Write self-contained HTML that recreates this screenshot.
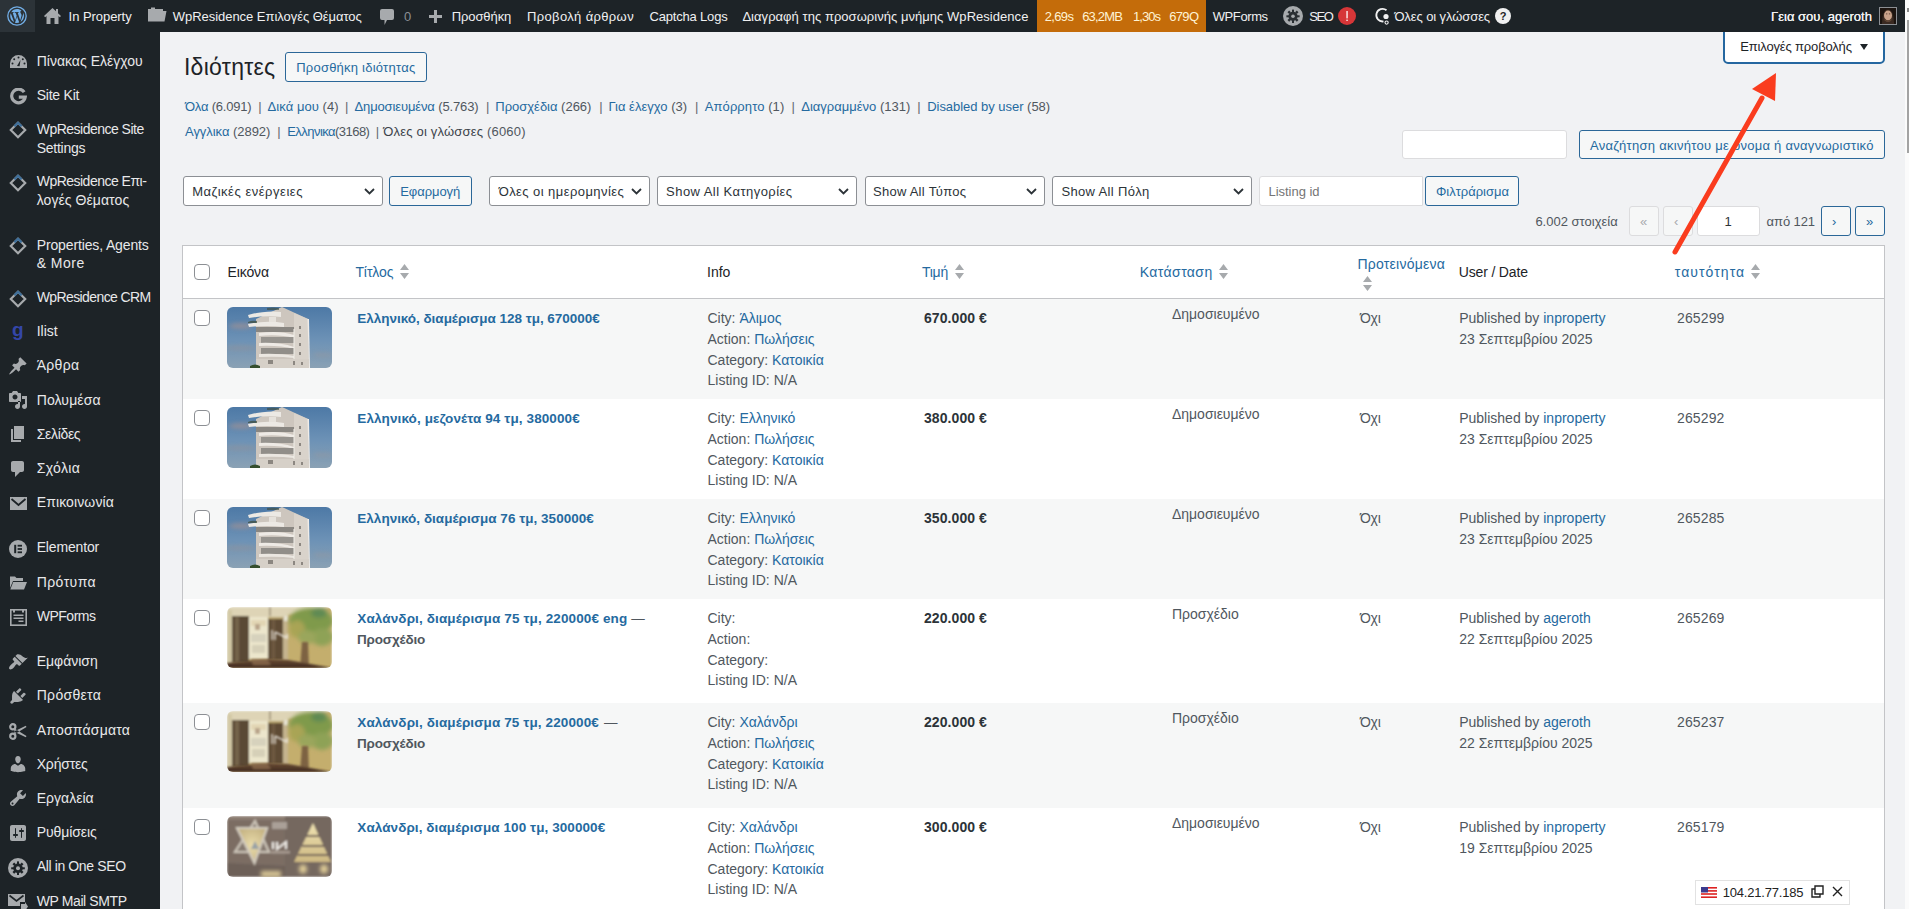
<!DOCTYPE html>
<html><head><meta charset="utf-8"><title>Ιδιότητες</title>
<style>
html,body{margin:0;padding:0;width:1909px;height:909px;overflow:hidden;background:#f1f2f4}
body{position:relative;font-family:"Liberation Sans",sans-serif}
.t{position:absolute;white-space:nowrap;line-height:20px;font-family:"Liberation Sans",sans-serif}
svg{display:block}
</style></head><body>
<div style="position:absolute;left:0px;top:0px;width:1909px;height:909px;background:#f1f2f4"></div><div style="position:absolute;left:0px;top:0px;width:1905px;height:32px;background:#1d2327"></div><div style="position:absolute;left:0px;top:32px;width:160px;height:877px;background:#1d2327"></div><div style="position:absolute;left:1905px;top:0px;width:4px;height:909px;background:#fbfbfb"></div><div style="position:absolute;left:1907px;top:20px;width:2px;height:133px;background:#a3a3a3"></div><div style="position:absolute;left:1907px;top:8px;width:2px;height:4px;background:#8a8a8a"></div><div style="position:absolute;left:0px;top:0px;width:35px;height:32px;background:#2c3338"></div><svg style="position:absolute;left:7px;top:6px" width="20" height="20" viewBox="0 0 20 20"><circle cx="10" cy="10" r="9.2" fill="none" stroke="#72aee6" stroke-width="1.3"/><path fill="#72aee6" d="M3.2 10c0 2.7 1.6 5 3.9 6.1L3.8 7.2C3.4 8.1 3.2 9 3.2 10zm11.4-.3c0-.8-.3-1.4-.6-1.9-.4-.6-.7-1.1-.7-1.7 0-.7.5-1.3 1.2-1.3h.1C13.4 3.7 11.8 3.1 10 3.1c-2.4 0-4.5 1.2-5.7 3.1h.4c.7 0 1.8-.1 1.8-.1.4 0 .4.5 0 .6 0 0-.4 0-.8.1l2.5 7.5 1.5-4.5-1.1-3c-.4 0-.7-.1-.7-.1-.4 0-.3-.6 0-.6 0 0 1.1.1 1.8.1.7 0 1.8-.1 1.8-.1.4 0 .4.5 0 .6 0 0-.4 0-.8.1l2.5 7.4.7-2.3c.3-1 .6-1.7.6-2.3zm-4.5.9l-2.1 6.1c.6.2 1.3.3 2 .3.8 0 1.6-.1 2.3-.4l-.1-.1-2.1-5.9zm6-4c0 .2.1.5.1.7 0 .7-.1 1.5-.5 2.5l-2.1 6.1c2.1-1.2 3.4-3.4 3.4-5.9 0-1.2-.3-2.4-.9-3.4z"/></svg><svg style="position:absolute;left:44px;top:8px" width="17" height="16" viewBox="0 0 17 16"><path fill="#a7aaad" d="M8.5 0 L0 8 L1.2 9.2 L2.5 8 V16 H14.5 V8 L15.8 9.2 L17 8 L14 5.2 V1 H12 V3.3 Z"/><rect x="6.5" y="10" width="4" height="6" fill="#1d2327"/></svg><svg style="position:absolute;left:147px;top:7px" width="20" height="15" viewBox="0 0 20 15"><path fill="#a7aaad" d="M1 2 H4 V0.5 H8 V2 H16 V4 H19.5 L17.5 14.5 H1 Z"/><path fill="#1d2327" d="M2.6 5.2 H18 L16.3 13 H2.6 Z" opacity="0.0"/></svg><svg style="position:absolute;left:380px;top:9px" width="14" height="17" viewBox="0 0 14 17"><path fill="#a7aaad" d="M2 0 H12 Q14 0 14 2 V9 Q14 11 12 11 H7 L4.5 16 V11 H2 Q0 11 0 9 V2 Q0 0 2 0Z"/></svg><div style="position:absolute;left:429px;top:15px;width:13px;height:3px;background:#a7aaad"></div><div style="position:absolute;left:434px;top:10px;width:3px;height:13px;background:#a7aaad"></div><div style="position:absolute;left:1037px;top:0px;width:169px;height:32px;background:#c46c0a"></div><svg style="position:absolute;left:1283px;top:6px" width="20" height="20" viewBox="0 0 20 20"><circle cx="10" cy="10" r="10" fill="#a7aaad"/><g fill="#2a2f33"><circle cx="10" cy="10.3" r="4.6"/><rect x="9" y="3.6" width="2" height="3"/><rect x="9" y="14" width="2" height="3"/><rect x="3.4" y="9.3" width="3" height="2"/><rect x="13.6" y="9.3" width="3" height="2"/><rect x="5" y="5" width="2.4" height="2.4" transform="rotate(45 6.2 6.2)"/><rect x="12.6" y="5" width="2.4" height="2.4" transform="rotate(45 13.8 6.2)"/><rect x="5" y="12.8" width="2.4" height="2.4" transform="rotate(45 6.2 14)"/><rect x="12.6" y="12.8" width="2.4" height="2.4" transform="rotate(45 13.8 14)"/></g><circle cx="10" cy="10.3" r="1.8" fill="#a7aaad"/></svg><div style="position:absolute;left:1338px;top:7px;width:18px;height:18px;border-radius:50%;background:#d63638"></div><svg style="position:absolute;left:1338px;top:7px" width="18" height="18" viewBox="0 0 18 18"><rect x="8.4" y="4" width="1.3" height="7.4" fill="#fff"/><rect x="8.4" y="12.6" width="1.3" height="1.4" fill="#fff"/></svg><svg style="position:absolute;left:1374px;top:7px" width="17" height="18" viewBox="0 0 17 18"><path d="M12.5 3.2 A6.3 6.3 0 1 0 9.5 14.4" fill="none" stroke="#f0f0f1" stroke-width="1.8"/><circle cx="12" cy="9.5" r="2.6" fill="#f0f0f1"/><circle cx="12.6" cy="15.6" r="1.6" fill="none" stroke="#f0f0f1" stroke-width="1.1"/></svg><div style="position:absolute;left:1495px;top:8px;width:16px;height:16px;border-radius:50%;background:#f0f0f1"></div><div style="position:absolute;left:1879px;top:7px;width:16px;height:16px;border:1px solid #8c8f94;line-height:0"><svg width="16" height="16" viewBox="0 0 16 16"><defs><filter id="av"><feGaussianBlur stdDeviation="0.5"/></filter></defs><rect width="16" height="16" fill="#1c1410"/><g filter="url(#av)"><path d="M2 16 Q2 2 8 1.5 Q14 2 14 16Z" fill="#3a2a20"/><ellipse cx="8" cy="7.5" rx="4" ry="5" fill="#c9a28a"/><path d="M4.5 10 Q8 15 11.5 10 L11.5 12.5 Q8 16 4.5 12.5Z" fill="#5e4536"/><rect x="6" y="5.5" width="1.3" height="0.8" fill="#4a3428"/><rect x="8.9" y="5.5" width="1.3" height="0.8" fill="#4a3428"/></g></svg></div><div style="position:absolute;left:10px;top:55px;width:17px;height:14px;line-height:0"><svg width="17" height="14" viewBox="0 0 17 14"><path fill="#a7aaad" d="M8.5 0 A8.5 8.5 0 0 0 0 8.5 V13 H17 V8.5 A8.5 8.5 0 0 0 8.5 0Z"/><g fill="#1d2327"><circle cx="8.5" cy="2.6" r="1"/><circle cx="4.2" cy="4.2" r="1"/><circle cx="12.8" cy="4.2" r="1"/><circle cx="2.5" cy="8.5" r="1"/><circle cx="14.5" cy="8.5" r="1"/><path d="M7 11 L10.5 5 L9.6 11.2 Z"/></g></svg></div><div style="position:absolute;left:10px;top:88px;width:17px;height:17px;line-height:0"><svg width="17" height="17" viewBox="0 0 17 17"><path fill="none" stroke="#a7aaad" stroke-width="3.2" d="M14.2 4.2 A6.8 6.8 0 1 0 15.2 9.2 H8.8"/></svg></div><div style="position:absolute;left:9px;top:121px;width:18px;height:18px;line-height:0"><svg width="18" height="18" viewBox="0 0 18 18"><path fill="none" stroke="#a7aaad" stroke-width="2.2" d="M9 1.8 L16.2 9 L9 16.2 L1.8 9Z"/><path fill="none" stroke="#3f6f9a" stroke-width="2.2" d="M5.4 5.4 L9 1.8 L12.6 5.4"/></svg></div><div style="position:absolute;left:9px;top:174px;width:18px;height:18px;line-height:0"><svg width="18" height="18" viewBox="0 0 18 18"><path fill="none" stroke="#a7aaad" stroke-width="2.2" d="M9 1.8 L16.2 9 L9 16.2 L1.8 9Z"/><path fill="none" stroke="#3f6f9a" stroke-width="2.2" d="M5.4 5.4 L9 1.8 L12.6 5.4"/></svg></div><div style="position:absolute;left:9px;top:237px;width:18px;height:18px;line-height:0"><svg width="18" height="18" viewBox="0 0 18 18"><path fill="none" stroke="#a7aaad" stroke-width="2.2" d="M9 1.8 L16.2 9 L9 16.2 L1.8 9Z"/><path fill="none" stroke="#3f6f9a" stroke-width="2.2" d="M5.4 5.4 L9 1.8 L12.6 5.4"/></svg></div><div style="position:absolute;left:9px;top:290px;width:18px;height:18px;line-height:0"><svg width="18" height="18" viewBox="0 0 18 18"><path fill="none" stroke="#a7aaad" stroke-width="2.2" d="M9 1.8 L16.2 9 L9 16.2 L1.8 9Z"/><path fill="none" stroke="#3f6f9a" stroke-width="2.2" d="M5.4 5.4 L9 1.8 L12.6 5.4"/></svg></div><div style="position:absolute;left:10px;top:323px;width:17px;height:19px;line-height:0"><svg width="17" height="19" viewBox="0 0 17 19"><text x="2" y="13" font-family="Liberation Sans" font-weight="700" font-size="19" fill="#3446a8">g</text></svg></div><div style="position:absolute;left:8px;top:356px;width:20px;height:20px;line-height:0"><svg width="20" height="20" viewBox="0 0 20 20"><path fill="#a7aaad" d="M10.44 3.02l1.82-1.82 6.36 6.35-1.83 1.82c-1.05-.68-2.48-.57-3.41.36l-.75.75c-.92.93-1.040 2.35-.35 3.41l-1.83 1.82-2.41-2.41-2.8 2.79c-.42.42-3.38 2.71-3.8 2.29s1.86-3.39 2.28-3.81l2.79-2.79L4.1 9.36l1.83-1.82c1.05.69 2.48.57 3.4-.36l.75-.75c.93-.92 1.05-2.35.36-3.41z"/></svg></div><div style="position:absolute;left:8px;top:390px;width:20px;height:20px;line-height:0"><svg width="20" height="20" viewBox="0 0 20 20"><path fill="#a7aaad" d="M13 11V4c0-.55-.45-1-1-1h-1.67L9 1H5L3.67 3H2c-.55 0-1 .45-1 1v7c0 .55.45 1 1 1h10c.55 0 1-.45 1-1zM7 4.5c1.38 0 2.5 1.120 2.5 2.5S8.38 9.5 7 9.5 4.5 8.38 4.5 7 5.62 4.5 7 4.5zM14 6h5v10.5c0 1.38-1.12 2.5-2.5 2.5S14 17.88 14 16.5s1.12-2.5 2.5-2.5c.17 0 .34.02.5.05V9h-3V6zm-4 8.05V11h2v5.5c0 1.38-1.12 2.5-2.5 2.5S7 17.88 7 16.5 8.12 14 9.5 14c.17 0 .34.02.5.05z"/></svg></div><div style="position:absolute;left:8px;top:424px;width:20px;height:20px;line-height:0"><svg width="20" height="20" viewBox="0 0 20 20"><path fill="#a7aaad" d="M6 15V2h10v13H6zm-1 1h8v2H3V5h2v11z"/></svg></div><div style="position:absolute;left:8px;top:459px;width:20px;height:20px;line-height:0"><svg width="20" height="20" viewBox="0 0 20 20"><path fill="#a7aaad" d="M5 2h9c1.1 0 2 .9 2 2v7c0 1.1-.9 2-2 2h-2l-5 5v-5H5c-1.1 0-2-.9-2-2V4c0-1.1.9-2 2-2z"/></svg></div><div style="position:absolute;left:10px;top:497px;width:17px;height:13px;line-height:0"><svg width="17" height="13" viewBox="0 0 17 13"><path fill="#a7aaad" d="M0 0 H17 V13 H0Z"/><path fill="none" stroke="#1d2327" stroke-width="1.8" d="M1.5 2 L8.5 8 L15.5 2"/></svg></div><div style="position:absolute;left:9px;top:540px;width:18px;height:18px;line-height:0"><svg width="18" height="18" viewBox="0 0 18 18"><circle cx="9" cy="9" r="9" fill="#a7aaad"/><g fill="#1d2327"><rect x="5.2" y="4.8" width="2" height="8.4"/><rect x="8.6" y="4.8" width="4.4" height="1.8"/><rect x="8.6" y="8.1" width="4.4" height="1.8"/><rect x="8.6" y="11.4" width="4.4" height="1.8"/></g></svg></div><div style="position:absolute;left:10px;top:576px;width:17px;height:14px;line-height:0"><svg width="17" height="14" viewBox="0 0 17 14"><path fill="#a7aaad" d="M0 0.5 H5 L6.5 2 H13 V5 H3 L0 12Z M3.2 6 H17 L14 13.5 H0.3Z"/></svg></div><div style="position:absolute;left:10px;top:609px;width:17px;height:17px;line-height:0"><svg width="17" height="17" viewBox="0 0 17 17"><rect x="0.8" y="0.8" width="15.4" height="15.4" fill="none" stroke="#a7aaad" stroke-width="1.6"/><g fill="#a7aaad"><rect x="3" y="0.5" width="2" height="3"/><rect x="12" y="0.5" width="2" height="3"/><rect x="3.5" y="5.5" width="10" height="1.5"/><rect x="3.5" y="8.5" width="10" height="1.5"/><rect x="8.5" y="11.5" width="5" height="1.5"/></g></svg></div><div style="position:absolute;left:8px;top:652px;width:20px;height:20px;line-height:0"><svg width="20" height="20" viewBox="0 0 20 20"><path fill="#a7aaad" d="M14.48 11.06L7.41 3.99l1.5-1.5c.5-.56 2.3-.47 3.51.32 1.21.8 1.43 1.28 2.91 2.1 1.18.64 2.45 1.26 4.45.85zm-.71.71L6.7 4.7 4.93 6.47c-.39.39-.39 1.02 0 1.41l1.06 1.06c.39.39.39 1.03 0 1.42-.6.6-1.43 1.11-2.21 1.69-.35.26-.7.53-1.01.84C1.43 14.23.4 16.08 1.4 17.07c.99 1 2.84-.03 4.18-1.36.31-.31.58-.66.85-1.02.57-.78 1.08-1.61 1.69-2.21.39-.39 1.02-.39 1.41 0l1.06 1.06c.39.39 1.02.39 1.41 0z"/></svg></div><div style="position:absolute;left:8px;top:686px;width:20px;height:20px;line-height:0"><svg width="20" height="20" viewBox="0 0 20 20"><path fill="#a7aaad" d="M13.11 4.36L9.87 7.6 8 5.73l3.24-3.24c.35-.34 1.05-.2 1.56.32.52.51.66 1.21.31 1.55zm-8 1.77l.91-1.12 9.01 9.01-1.19.84c-.71.71-2.63 1.16-3.820 1.16H6.14L4.9 17.26c-.59.59-1.54.59-2.12 0-.59-.58-.59-1.53 0-2.12l1.24-1.24v-3.88c0-1.13.4-3.19 1.09-3.890zm7.26 3.97l3.24-3.24c.34-.35 1.04-.21 1.55.31.52.51.66 1.21.31 1.55l-3.24 3.25z"/></svg></div><div style="position:absolute;left:9px;top:723px;width:18px;height:17px;line-height:0"><svg width="18" height="17" viewBox="0 0 18 17"><g fill="none" stroke="#a7aaad" stroke-width="2.2"><circle cx="3.8" cy="3.8" r="2.6"/><circle cx="3.8" cy="13.2" r="2.6"/></g><path fill="#a7aaad" d="M5.5 5.5 L17.5 13 L16.8 14.2 L5.2 8.8Z M5.2 11.5 L17.5 4 L16.8 2.8 L5.5 8.2Z"/></svg></div><div style="position:absolute;left:8px;top:754px;width:20px;height:20px;line-height:0"><svg width="20" height="20" viewBox="0 0 20 20"><path fill="#a7aaad" d="M10 9.25c-2.27 0-2.73-3.44-2.73-3.44C7 4.02 7.82 2 9.97 2c2.16 0 2.98 2.02 2.71 3.81 0 0-.41 3.44-2.68 3.44zm0 2.57L12.72 10c2.39 0 4.52 2.33 4.52 4.53v2.49s-3.65 1.13-7.24 1.13c-3.65 0-7.24-1.130-7.24-1.13v-2.49c0-2.25 1.94-4.48 4.47-4.48z"/></svg></div><div style="position:absolute;left:8px;top:788px;width:20px;height:20px;line-height:0"><svg width="20" height="20" viewBox="0 0 20 20"><path fill="#a7aaad" d="M16.68 9.77c-1.34 1.34-3.3 1.67-4.95.99l-5.41 6.52c-.99.99-2.59.99-3.58 0s-.99-2.59 0-3.57l6.52-5.42c-.68-1.65-.35-3.61.99-4.95 1.28-1.28 3.12-1.62 4.72-1.06l-2.89 2.89 2.82 2.82 2.86-2.870c.53 1.58.18 3.39-1.08 4.65zM3.81 16.21c.4.39 1.040.39 1.43 0 .4-.4.4-1.04 0-1.43-.39-.4-1.03-.4-1.43 0-.39.39-.39 1.03 0 1.43z"/></svg></div><div style="position:absolute;left:8px;top:823px;width:20px;height:20px;line-height:0"><svg width="20" height="20" viewBox="0 0 20 20"><path fill="#a7aaad" d="M18 16V4c0-1.1-.9-2-2-2H4c-1.1 0-2 .9-2 2v12c0 1.1.9 2 2 2h12c1.1 0 2-.9 2-2zM8 11h1c.55 0 1 .45 1 1s-.45 1-1 1H8v1.5c0 .28-.22.5-.5.5s-.5-.22-.5-.5V13H6c-.55 0-1-.45-1-1s.45-1 1-1h1V5.5c0-.28.22-.5.5-.5s.5.22.5.5V11zm5-2h-1c-.55 0-1-.45-1-1s.45-1 1-1h1V5.5c0-.28.22-.5.5-.5s.5.22.5.5V7h1c.55 0 1 .45 1 1s-.45 1-1 1h-1v5.5c0 .28-.22.5-.5.5s-.5-.22-.5-.5V9z"/></svg></div><div style="position:absolute;left:8px;top:858px;width:20px;height:20px;line-height:0"><svg width="20" height="20" viewBox="0 0 20 20"><circle cx="10" cy="10" r="10" fill="#a7aaad"/><g fill="#1d2327"><circle cx="10" cy="10.3" r="4.8"/><rect x="9" y="3.4" width="2" height="3"/><rect x="9" y="14" width="2" height="3"/><rect x="3.2" y="9.3" width="3" height="2"/><rect x="13.8" y="9.3" width="3" height="2"/><rect x="5" y="5" width="2.4" height="2.4" transform="rotate(45 6.2 6.2)"/><rect x="12.6" y="5" width="2.4" height="2.4" transform="rotate(45 13.8 6.2)"/><rect x="5" y="12.8" width="2.4" height="2.4" transform="rotate(45 6.2 14)"/><rect x="12.6" y="12.8" width="2.4" height="2.4" transform="rotate(45 13.8 14)"/></g><circle cx="10" cy="10.3" r="2" fill="#a7aaad"/></svg></div><div style="position:absolute;left:8px;top:894px;width:20px;height:17px;line-height:0"><svg width="20" height="17" viewBox="0 0 20 17"><path fill="#a7aaad" d="M0 0 H17 V8 H12 V12 H0Z"/><path fill="none" stroke="#1d2327" stroke-width="1.6" d="M1.5 1.5 L8.5 7 L15.5 1.5"/><path fill="#a7aaad" d="M13 10 H17 V8 L20 12.5 L17 17 V15 H13Z"/></svg></div><div style="position:absolute;left:1723px;top:26px;width:158px;height:34px;background:#fff;border:2px solid #2567a0;border-radius:0 0 5px 5px"></div><svg style="position:absolute;left:1860px;top:44px" width="8" height="6" viewBox="0 0 8 6"><path d="M0 0 H8 L4 6Z" fill="#1d2327"/></svg><div style="position:absolute;left:1700px;top:0px;width:205px;height:32px;background:#1d2327"></div><div style="position:absolute;left:1879px;top:7px;width:16px;height:16px;border:1px solid #8c8f94;line-height:0"><svg width="16" height="16" viewBox="0 0 16 16"><defs><filter id="av"><feGaussianBlur stdDeviation="0.5"/></filter></defs><rect width="16" height="16" fill="#1c1410"/><g filter="url(#av)"><path d="M2 16 Q2 2 8 1.5 Q14 2 14 16Z" fill="#3a2a20"/><ellipse cx="8" cy="7.5" rx="4" ry="5" fill="#c9a28a"/><path d="M4.5 10 Q8 15 11.5 10 L11.5 12.5 Q8 16 4.5 12.5Z" fill="#5e4536"/><rect x="6" y="5.5" width="1.3" height="0.8" fill="#4a3428"/><rect x="8.9" y="5.5" width="1.3" height="0.8" fill="#4a3428"/></g></svg></div><div style="position:absolute;left:285px;top:52px;width:140px;height:28px;border:1px solid #2b6798;border-radius:3px;background:#f6f7f7"></div><div style="position:absolute;left:1402px;top:130px;width:163px;height:27px;background:#fff;border:1px solid #dcdcde;border-radius:3px"></div><div style="position:absolute;left:1579px;top:130px;width:304px;height:27px;background:#f6f7f7;border:1px solid #2b6798;border-radius:3px"></div><div style="position:absolute;left:183px;top:176px;width:198px;height:28px;background:#fff;border:1px solid #8c8f94;border-radius:3px"></div><svg style="position:absolute;left:363.5px;top:188px" width="11" height="7" viewBox="0 0 11 7"><path d="M1 1 L5.5 5.5 L10 1" fill="none" stroke="#2c3338" stroke-width="1.8"/></svg><div style="position:absolute;left:389px;top:176px;width:81px;height:28px;background:#f6f7f7;border:1px solid #2b6798;border-radius:3px"></div><div style="position:absolute;left:489px;top:176px;width:159px;height:28px;background:#fff;border:1px solid #8c8f94;border-radius:3px"></div><svg style="position:absolute;left:630.5px;top:188px" width="11" height="7" viewBox="0 0 11 7"><path d="M1 1 L5.5 5.5 L10 1" fill="none" stroke="#2c3338" stroke-width="1.8"/></svg><div style="position:absolute;left:657px;top:176px;width:198px;height:28px;background:#fff;border:1px solid #8c8f94;border-radius:3px"></div><svg style="position:absolute;left:837.5px;top:188px" width="11" height="7" viewBox="0 0 11 7"><path d="M1 1 L5.5 5.5 L10 1" fill="none" stroke="#2c3338" stroke-width="1.8"/></svg><div style="position:absolute;left:865px;top:176px;width:178px;height:28px;background:#fff;border:1px solid #8c8f94;border-radius:3px"></div><svg style="position:absolute;left:1025.5px;top:188px" width="11" height="7" viewBox="0 0 11 7"><path d="M1 1 L5.5 5.5 L10 1" fill="none" stroke="#2c3338" stroke-width="1.8"/></svg><div style="position:absolute;left:1052px;top:176px;width:198px;height:28px;background:#fff;border:1px solid #8c8f94;border-radius:3px"></div><svg style="position:absolute;left:1232.5px;top:188px" width="11" height="7" viewBox="0 0 11 7"><path d="M1 1 L5.5 5.5 L10 1" fill="none" stroke="#2c3338" stroke-width="1.8"/></svg><div style="position:absolute;left:1259px;top:176px;width:162px;height:28px;background:#fff;border:1px solid #dcdcde;border-radius:3px 0 0 3px"></div><div style="position:absolute;left:1425px;top:176px;width:92px;height:28px;background:#f6f7f7;border:1px solid #2b6798;border-radius:3px"></div><div style="position:absolute;left:1629px;top:206px;width:28px;height:28px;background:#f6f7f7;border:1px solid #dcdcde;border-radius:3px"></div><div style="position:absolute;left:1663px;top:206px;width:28px;height:28px;background:#f6f7f7;border:1px solid #dcdcde;border-radius:3px"></div><div style="position:absolute;left:1697px;top:206px;width:61px;height:28px;background:#fff;border:1px solid #dcdcde;border-radius:3px"></div><div style="position:absolute;left:1821px;top:206px;width:28px;height:28px;background:#f6f7f7;border:1px solid #2b6798;border-radius:3px"></div><div style="position:absolute;left:1855px;top:206px;width:28px;height:28px;background:#f6f7f7;border:1px solid #2b6798;border-radius:3px"></div><div style="position:absolute;left:182px;top:245px;width:1701px;height:670px;background:#fff;border:1px solid #c3c4c7;border-bottom:0"></div><div style="position:absolute;left:183px;top:298px;width:1701px;height:1px;background:#c3c4c7"></div><div style="position:absolute;left:183px;top:299px;width:1701px;height:100px;background:#f6f7f7"></div><div style="position:absolute;left:183px;top:499px;width:1701px;height:100px;background:#f6f7f7"></div><div style="position:absolute;left:183px;top:703px;width:1701px;height:105px;background:#f6f7f7"></div><div style="position:absolute;left:194px;top:264px;width:14px;height:14px;background:#fff;border:1px solid #8c8f94;border-radius:4px"></div><svg style="position:absolute;left:400px;top:264px" width="9" height="16" viewBox="0 0 9 16"><path d="M4.5 0 L9 6 H0Z M0 9 H9 L4.5 15Z" fill="#a7aaad"/></svg><svg style="position:absolute;left:955px;top:264px" width="9" height="16" viewBox="0 0 9 16"><path d="M4.5 0 L9 6 H0Z M0 9 H9 L4.5 15Z" fill="#a7aaad"/></svg><svg style="position:absolute;left:1219px;top:264px" width="9" height="16" viewBox="0 0 9 16"><path d="M4.5 0 L9 6 H0Z M0 9 H9 L4.5 15Z" fill="#a7aaad"/></svg><svg style="position:absolute;left:1363px;top:276px" width="9" height="16" viewBox="0 0 9 16"><path d="M4.5 0 L9 6 H0Z M0 9 H9 L4.5 15Z" fill="#a7aaad"/></svg><svg style="position:absolute;left:1751px;top:264px" width="9" height="16" viewBox="0 0 9 16"><path d="M4.5 0 L9 6 H0Z M0 9 H9 L4.5 15Z" fill="#a7aaad"/></svg><div style="position:absolute;left:194px;top:310px;width:14px;height:14px;background:#fff;border:1px solid #8c8f94;border-radius:4px"></div><div style="position:absolute;left:227px;top:307px;width:105px;height:61px;border-radius:6px;overflow:hidden;line-height:0"><svg width="105" height="61" viewBox="0 0 105 61"><defs><linearGradient id="sky" x1="0" y1="0" x2="0" y2="1"><stop offset="0" stop-color="#4d79a6"/><stop offset="0.55" stop-color="#6d92b6"/><stop offset="1" stop-color="#8aa1b4"/></linearGradient><filter id="fb" x="-5%" y="-5%" width="110%" height="110%"><feGaussianBlur stdDeviation="0.7"/></filter><filter id="fc" x="-20%" y="-50%" width="140%" height="200%"><feGaussianBlur stdDeviation="2"/></filter></defs>
<rect width="105" height="61" fill="url(#sky)"/>
<g filter="url(#fc)" opacity="0.75"><ellipse cx="14" cy="19" rx="12" ry="3" fill="#9a9096"/><ellipse cx="14" cy="41" rx="16" ry="2.5" fill="#8a93a0"/><ellipse cx="96" cy="48" rx="10" ry="2" fill="#8e98a4"/></g>
<g filter="url(#fb)">
<path d="M29 12 L55 0 L81 12 L82 61 L29 61Z" fill="#cdc6be"/>
<path d="M67 6 L81 12 L82 61 L67 61Z" fill="#d9d3cb"/>
<path d="M80.5 12 L82 61 L83 61 L82 12Z" fill="#f0ece8"/>
<path d="M21 8 Q40 3 54 5 L54 10 Q40 8 22 11Z" fill="#ece9e4"/>
<path d="M21 17 Q40 13 57 16 L57 20 Q40 18 22 20Z" fill="#ece9e4"/>
<rect x="29" y="20" width="38" height="5" fill="#8a8782"/>
<path d="M32 26 Q52 23 67 28 L67 31 Q52 27 32 29Z" fill="#eeeae5"/>
<rect x="34" y="30" width="33" height="6" fill="#96938e"/>
<path d="M32 36 Q52 35 67 40 L67 42 Q52 38 32 39Z" fill="#eeeae5"/>
<rect x="34" y="41" width="33" height="6" fill="#918e89"/>
<path d="M32 47 Q52 46 67 49 L67 51 Q52 49 32 50Z" fill="#ebe7e1"/>
<rect x="29" y="52" width="53" height="9" fill="#d6d0c8"/>
<g fill="#8c8781"><rect x="72" y="19" width="2" height="3"/><rect x="72" y="27" width="2" height="3"/><rect x="72" y="36" width="2" height="3"/><rect x="72" y="45" width="2" height="3"/><rect x="66" y="54" width="2" height="4"/><rect x="74" y="55" width="2" height="3"/><rect x="41" y="53" width="5" height="4"/></g>
<rect x="66.5" y="22" width="1" height="30" fill="#f2efea"/>
<rect x="42" y="10" width="7" height="5" fill="#e6e2dc"/>
<path d="M23 59 Q28 56 33 59 L33 61 L23 61Z" fill="#35502f"/>
<path d="M21 15 Q25 13 30 14 L30 16 L21 16Z" fill="#3a4a38" opacity="0.7"/>
<path d="M40 1 Q46 0 52 1 L52 3 L40 3Z" fill="#3a4a38" opacity="0.6"/>
</g></svg></div><div style="position:absolute;left:194px;top:410px;width:14px;height:14px;background:#fff;border:1px solid #8c8f94;border-radius:4px"></div><div style="position:absolute;left:227px;top:407px;width:105px;height:61px;border-radius:6px;overflow:hidden;line-height:0"><svg width="105" height="61" viewBox="0 0 105 61"><defs><linearGradient id="sky" x1="0" y1="0" x2="0" y2="1"><stop offset="0" stop-color="#4d79a6"/><stop offset="0.55" stop-color="#6d92b6"/><stop offset="1" stop-color="#8aa1b4"/></linearGradient><filter id="fb" x="-5%" y="-5%" width="110%" height="110%"><feGaussianBlur stdDeviation="0.7"/></filter><filter id="fc" x="-20%" y="-50%" width="140%" height="200%"><feGaussianBlur stdDeviation="2"/></filter></defs>
<rect width="105" height="61" fill="url(#sky)"/>
<g filter="url(#fc)" opacity="0.75"><ellipse cx="14" cy="19" rx="12" ry="3" fill="#9a9096"/><ellipse cx="14" cy="41" rx="16" ry="2.5" fill="#8a93a0"/><ellipse cx="96" cy="48" rx="10" ry="2" fill="#8e98a4"/></g>
<g filter="url(#fb)">
<path d="M29 12 L55 0 L81 12 L82 61 L29 61Z" fill="#cdc6be"/>
<path d="M67 6 L81 12 L82 61 L67 61Z" fill="#d9d3cb"/>
<path d="M80.5 12 L82 61 L83 61 L82 12Z" fill="#f0ece8"/>
<path d="M21 8 Q40 3 54 5 L54 10 Q40 8 22 11Z" fill="#ece9e4"/>
<path d="M21 17 Q40 13 57 16 L57 20 Q40 18 22 20Z" fill="#ece9e4"/>
<rect x="29" y="20" width="38" height="5" fill="#8a8782"/>
<path d="M32 26 Q52 23 67 28 L67 31 Q52 27 32 29Z" fill="#eeeae5"/>
<rect x="34" y="30" width="33" height="6" fill="#96938e"/>
<path d="M32 36 Q52 35 67 40 L67 42 Q52 38 32 39Z" fill="#eeeae5"/>
<rect x="34" y="41" width="33" height="6" fill="#918e89"/>
<path d="M32 47 Q52 46 67 49 L67 51 Q52 49 32 50Z" fill="#ebe7e1"/>
<rect x="29" y="52" width="53" height="9" fill="#d6d0c8"/>
<g fill="#8c8781"><rect x="72" y="19" width="2" height="3"/><rect x="72" y="27" width="2" height="3"/><rect x="72" y="36" width="2" height="3"/><rect x="72" y="45" width="2" height="3"/><rect x="66" y="54" width="2" height="4"/><rect x="74" y="55" width="2" height="3"/><rect x="41" y="53" width="5" height="4"/></g>
<rect x="66.5" y="22" width="1" height="30" fill="#f2efea"/>
<rect x="42" y="10" width="7" height="5" fill="#e6e2dc"/>
<path d="M23 59 Q28 56 33 59 L33 61 L23 61Z" fill="#35502f"/>
<path d="M21 15 Q25 13 30 14 L30 16 L21 16Z" fill="#3a4a38" opacity="0.7"/>
<path d="M40 1 Q46 0 52 1 L52 3 L40 3Z" fill="#3a4a38" opacity="0.6"/>
</g></svg></div><div style="position:absolute;left:194px;top:510px;width:14px;height:14px;background:#fff;border:1px solid #8c8f94;border-radius:4px"></div><div style="position:absolute;left:227px;top:507px;width:105px;height:61px;border-radius:6px;overflow:hidden;line-height:0"><svg width="105" height="61" viewBox="0 0 105 61"><defs><linearGradient id="sky" x1="0" y1="0" x2="0" y2="1"><stop offset="0" stop-color="#4d79a6"/><stop offset="0.55" stop-color="#6d92b6"/><stop offset="1" stop-color="#8aa1b4"/></linearGradient><filter id="fb" x="-5%" y="-5%" width="110%" height="110%"><feGaussianBlur stdDeviation="0.7"/></filter><filter id="fc" x="-20%" y="-50%" width="140%" height="200%"><feGaussianBlur stdDeviation="2"/></filter></defs>
<rect width="105" height="61" fill="url(#sky)"/>
<g filter="url(#fc)" opacity="0.75"><ellipse cx="14" cy="19" rx="12" ry="3" fill="#9a9096"/><ellipse cx="14" cy="41" rx="16" ry="2.5" fill="#8a93a0"/><ellipse cx="96" cy="48" rx="10" ry="2" fill="#8e98a4"/></g>
<g filter="url(#fb)">
<path d="M29 12 L55 0 L81 12 L82 61 L29 61Z" fill="#cdc6be"/>
<path d="M67 6 L81 12 L82 61 L67 61Z" fill="#d9d3cb"/>
<path d="M80.5 12 L82 61 L83 61 L82 12Z" fill="#f0ece8"/>
<path d="M21 8 Q40 3 54 5 L54 10 Q40 8 22 11Z" fill="#ece9e4"/>
<path d="M21 17 Q40 13 57 16 L57 20 Q40 18 22 20Z" fill="#ece9e4"/>
<rect x="29" y="20" width="38" height="5" fill="#8a8782"/>
<path d="M32 26 Q52 23 67 28 L67 31 Q52 27 32 29Z" fill="#eeeae5"/>
<rect x="34" y="30" width="33" height="6" fill="#96938e"/>
<path d="M32 36 Q52 35 67 40 L67 42 Q52 38 32 39Z" fill="#eeeae5"/>
<rect x="34" y="41" width="33" height="6" fill="#918e89"/>
<path d="M32 47 Q52 46 67 49 L67 51 Q52 49 32 50Z" fill="#ebe7e1"/>
<rect x="29" y="52" width="53" height="9" fill="#d6d0c8"/>
<g fill="#8c8781"><rect x="72" y="19" width="2" height="3"/><rect x="72" y="27" width="2" height="3"/><rect x="72" y="36" width="2" height="3"/><rect x="72" y="45" width="2" height="3"/><rect x="66" y="54" width="2" height="4"/><rect x="74" y="55" width="2" height="3"/><rect x="41" y="53" width="5" height="4"/></g>
<rect x="66.5" y="22" width="1" height="30" fill="#f2efea"/>
<rect x="42" y="10" width="7" height="5" fill="#e6e2dc"/>
<path d="M23 59 Q28 56 33 59 L33 61 L23 61Z" fill="#35502f"/>
<path d="M21 15 Q25 13 30 14 L30 16 L21 16Z" fill="#3a4a38" opacity="0.7"/>
<path d="M40 1 Q46 0 52 1 L52 3 L40 3Z" fill="#3a4a38" opacity="0.6"/>
</g></svg></div><div style="position:absolute;left:194px;top:610px;width:14px;height:14px;background:#fff;border:1px solid #8c8f94;border-radius:4px"></div><div style="position:absolute;left:227px;top:607px;width:105px;height:61px;border-radius:6px;overflow:hidden;line-height:0"><svg width="105" height="61" viewBox="0 0 105 61"><defs><filter id="fr" x="-5%" y="-5%" width="110%" height="110%"><feGaussianBlur stdDeviation="0.9"/></filter><filter id="fr2" x="-20%" y="-20%" width="140%" height="140%"><feGaussianBlur stdDeviation="2.2"/></filter><linearGradient id="flr" x1="0" y1="0" x2="0" y2="1"><stop offset="0" stop-color="#6a4c36"/><stop offset="1" stop-color="#3f2a1e"/></linearGradient></defs>
<g filter="url(#fr)">
<rect width="105" height="61" fill="#b9a56c"/>
<path d="M0 0 H105 V3 L60 10 H0Z" fill="#ded4b6"/>
<rect x="0" y="3" width="5" height="58" fill="#d3c9a6"/>
<rect x="5" y="9" width="17" height="47" fill="#5a4a36"/>
<rect x="8" y="10" width="4" height="45" fill="#76644b"/>
<rect x="22" y="10" width="19" height="42" fill="#ece6cc"/>
<rect x="24" y="13" width="15" height="6" fill="#e2d6b4"/>
<rect x="28" y="17" width="5" height="6" fill="#b9a48a"/>
<rect x="24" y="27" width="15" height="8" fill="#d7d2bd"/>
<rect x="25" y="38" width="13" height="8" fill="#d6d0b8"/>
<rect x="41" y="12" width="15" height="41" fill="#5f4b35"/>
<rect x="45" y="12" width="3" height="41" fill="#6f5a42"/>
<rect x="56" y="9" width="5" height="44" fill="#c5b48f"/>
<rect x="57" y="9" width="6" height="5" fill="#e9e4d4"/>
<path d="M61 8 L105 0 L105 61 L61 53Z" fill="#c4ae6d"/>
<path d="M43 0 V9" stroke="#5a4a36" stroke-width="0.8"/>
</g>
<g filter="url(#fr2)">
<ellipse cx="84" cy="14" rx="22" ry="13" fill="#7f9a4c"/>
<ellipse cx="70" cy="22" rx="8" ry="9" fill="#a9a455"/>
<ellipse cx="95" cy="30" rx="11" ry="9" fill="#8ea256"/>
<ellipse cx="80" cy="30" rx="9" ry="7" fill="#9aa65c"/>
<ellipse cx="92" cy="6" rx="8" ry="5" fill="#5f8a52"/>
</g>
<g filter="url(#fr)">
<path d="M75 35 L81 35 L82 61 L73 61Z" fill="#7d6242"/>
<path d="M0 56 L41 52 L61 53 L105 61 L0 61Z" fill="url(#flr)"/>
<path d="M24 52 L40 52 L44 58 L26 58Z" fill="#8a6a4c" opacity="0.8"/>
<path d="M45 23 V33 M48 25 V33 M48 25 L60 31 V27" stroke="#f2efe8" stroke-width="1.5" fill="none" opacity="0.85"/>
</g></svg></div><div style="position:absolute;left:194px;top:714px;width:14px;height:14px;background:#fff;border:1px solid #8c8f94;border-radius:4px"></div><div style="position:absolute;left:227px;top:711px;width:105px;height:61px;border-radius:6px;overflow:hidden;line-height:0"><svg width="105" height="61" viewBox="0 0 105 61"><defs><filter id="fr" x="-5%" y="-5%" width="110%" height="110%"><feGaussianBlur stdDeviation="0.9"/></filter><filter id="fr2" x="-20%" y="-20%" width="140%" height="140%"><feGaussianBlur stdDeviation="2.2"/></filter><linearGradient id="flr" x1="0" y1="0" x2="0" y2="1"><stop offset="0" stop-color="#6a4c36"/><stop offset="1" stop-color="#3f2a1e"/></linearGradient></defs>
<g filter="url(#fr)">
<rect width="105" height="61" fill="#b9a56c"/>
<path d="M0 0 H105 V3 L60 10 H0Z" fill="#ded4b6"/>
<rect x="0" y="3" width="5" height="58" fill="#d3c9a6"/>
<rect x="5" y="9" width="17" height="47" fill="#5a4a36"/>
<rect x="8" y="10" width="4" height="45" fill="#76644b"/>
<rect x="22" y="10" width="19" height="42" fill="#ece6cc"/>
<rect x="24" y="13" width="15" height="6" fill="#e2d6b4"/>
<rect x="28" y="17" width="5" height="6" fill="#b9a48a"/>
<rect x="24" y="27" width="15" height="8" fill="#d7d2bd"/>
<rect x="25" y="38" width="13" height="8" fill="#d6d0b8"/>
<rect x="41" y="12" width="15" height="41" fill="#5f4b35"/>
<rect x="45" y="12" width="3" height="41" fill="#6f5a42"/>
<rect x="56" y="9" width="5" height="44" fill="#c5b48f"/>
<rect x="57" y="9" width="6" height="5" fill="#e9e4d4"/>
<path d="M61 8 L105 0 L105 61 L61 53Z" fill="#c4ae6d"/>
<path d="M43 0 V9" stroke="#5a4a36" stroke-width="0.8"/>
</g>
<g filter="url(#fr2)">
<ellipse cx="84" cy="14" rx="22" ry="13" fill="#7f9a4c"/>
<ellipse cx="70" cy="22" rx="8" ry="9" fill="#a9a455"/>
<ellipse cx="95" cy="30" rx="11" ry="9" fill="#8ea256"/>
<ellipse cx="80" cy="30" rx="9" ry="7" fill="#9aa65c"/>
<ellipse cx="92" cy="6" rx="8" ry="5" fill="#5f8a52"/>
</g>
<g filter="url(#fr)">
<path d="M75 35 L81 35 L82 61 L73 61Z" fill="#7d6242"/>
<path d="M0 56 L41 52 L61 53 L105 61 L0 61Z" fill="url(#flr)"/>
<path d="M24 52 L40 52 L44 58 L26 58Z" fill="#8a6a4c" opacity="0.8"/>
<path d="M45 23 V33 M48 25 V33 M48 25 L60 31 V27" stroke="#f2efe8" stroke-width="1.5" fill="none" opacity="0.85"/>
</g></svg></div><div style="position:absolute;left:194px;top:819px;width:14px;height:14px;background:#fff;border:1px solid #8c8f94;border-radius:4px"></div><div style="position:absolute;left:227px;top:816px;width:105px;height:61px;border-radius:6px;overflow:hidden;line-height:0"><svg width="105" height="61" viewBox="0 0 105 61"><defs><filter id="fs" x="-5%" y="-5%" width="110%" height="110%"><feGaussianBlur stdDeviation="0.8"/></filter><filter id="fs2" x="-50%" y="-50%" width="200%" height="200%"><feGaussianBlur stdDeviation="2"/></filter><radialGradient id="glow" cx="0.5" cy="0.5" r="0.6"><stop offset="0" stop-color="#eadcab"/><stop offset="1" stop-color="#c2b080"/></radialGradient><linearGradient id="pyr" x1="0" y1="0" x2="0" y2="1"><stop offset="0" stop-color="#efe2b2"/><stop offset="1" stop-color="#cdb882"/></linearGradient></defs>
<g filter="url(#fs)">
<rect width="105" height="61" fill="#7b6d64"/>
<path d="M0 0 H105 V4 H0Z" fill="#8c7d72"/>
<path d="M0 47 L58 50 L58 61 L0 61Z" fill="#6d6058"/>
<path d="M58 0 H105 V61 H58Z" fill="#75675e"/>
<path d="M28 5 L42 36 L8 36Z" fill="#857970" stroke="#ccc4b8" stroke-width="2.2"/>
<path d="M27.5 47 L40 12 L10 12Z" fill="url(#glow)" stroke="#d2cabd" stroke-width="2.2"/>
<path d="M28 25 L32 33 L24 33Z" fill="#98a1a6"/>

<rect x="45" y="6" width="15" height="7" fill="#aaa098"/>
<path d="M46 26 V33 M50 26 V33 L59 26 V33" stroke="#efebe6" stroke-width="2" fill="none"/>
<rect x="44" y="35" width="19" height="2.5" fill="#a89b91"/>
<path d="M86 7 L104 46 H67Z" fill="url(#pyr)"/>
<g stroke="#6f6158" stroke-width="2"><path d="M79 20 H93"/><path d="M75 30 H98"/><path d="M70.5 39 H102"/></g>
</g>
<g filter="url(#fs2)"><ellipse cx="76" cy="53" rx="4" ry="4.5" fill="#e2cf98"/><ellipse cx="97" cy="53" rx="4" ry="4.5" fill="#e2cf98"/><rect x="34" y="55" width="20" height="6" fill="#d9c796"/></g></svg></div>
<div class="t" style="left:68.6px;top:7px;font-size:13px;color:#f0f0f1;letter-spacing:-0.054px;">In Property</div><div class="t" style="left:172.8px;top:7px;font-size:13px;color:#f0f0f1;letter-spacing:-0.041px;">WpResidence Επιλογές Θέματος</div><div class="t" style="left:404px;top:7px;font-size:13px;color:#8c8f94;">0</div><div class="t" style="left:451.7px;top:7px;font-size:13px;color:#f0f0f1;letter-spacing:-0.092px;">Προσθήκη</div><div class="t" style="left:527px;top:7px;font-size:13px;color:#f0f0f1;letter-spacing:0.356px;">Προβολή άρθρων</div><div class="t" style="left:649.5px;top:7px;font-size:13px;color:#f0f0f1;letter-spacing:-0.186px;">Captcha Logs</div><div class="t" style="left:742.4px;top:7px;font-size:13px;color:#f0f0f1;letter-spacing:0.038px;">Διαγραφή της προσωρινής μνήμης WpResidence</div><div class="t" style="left:1044.7px;top:7px;font-size:13px;color:#fff3d4;letter-spacing:-0.642px;">2,69s</div><div class="t" style="left:1082.2px;top:7px;font-size:13px;color:#fff3d4;letter-spacing:-0.835px;">63,2MB</div><div class="t" style="left:1133px;top:7px;font-size:13px;color:#fff3d4;letter-spacing:-0.963px;">1,30s</div><div class="t" style="left:1169.3px;top:7px;font-size:13px;color:#fff3d4;letter-spacing:-0.703px;">679Q</div><div class="t" style="left:1212.7px;top:7px;font-size:13px;color:#f0f0f1;letter-spacing:-0.397px;">WPForms</div><div class="t" style="left:1309.3px;top:7px;font-size:13px;color:#f0f0f1;letter-spacing:-1.490px;">SEO</div><div class="t" style="left:1394.4px;top:7px;font-size:13px;color:#f0f0f1;letter-spacing:-0.095px;">Όλες οι γλώσσες</div><div class="t" style="left:1499.8px;top:6px;font-size:11px;font-weight:700;color:#1d2327;">?</div><div class="t" style="left:1771px;top:7px;font-size:13px;color:#f0f0f1;letter-spacing:0.020px;">Γεια σου, ageroth</div><div class="t" style="left:36.7px;top:51px;font-size:14px;color:#e8e8ea;letter-spacing:0.008px;">Πίνακας Ελέγχου</div><div class="t" style="left:36.7px;top:85px;font-size:14px;color:#e8e8ea;letter-spacing:-0.220px;">Site Kit</div><div class="t" style="left:36.7px;top:119px;font-size:14px;color:#e8e8ea;letter-spacing:-0.511px;">WpResidence Site</div><div class="t" style="left:36.7px;top:138px;font-size:14px;color:#e8e8ea;letter-spacing:-0.262px;">Settings</div><div class="t" style="left:36.7px;top:171px;font-size:14px;color:#e8e8ea;letter-spacing:-0.513px;">WpResidence Επι-</div><div class="t" style="left:36.7px;top:190px;font-size:14px;color:#e8e8ea;letter-spacing:0.069px;">λογές Θέματος</div><div class="t" style="left:36.7px;top:235px;font-size:14px;color:#e8e8ea;letter-spacing:-0.134px;">Properties, Agents</div><div class="t" style="left:36.7px;top:253px;font-size:14px;color:#e8e8ea;letter-spacing:0.479px;">&amp; More</div><div class="t" style="left:36.7px;top:287px;font-size:14px;color:#e8e8ea;letter-spacing:-0.596px;">WpResidence CRM</div><div class="t" style="left:36.7px;top:321px;font-size:14px;color:#e8e8ea;letter-spacing:0.000px;">Ilist</div><div class="t" style="left:36.7px;top:355px;font-size:14px;color:#e8e8ea;letter-spacing:0.289px;">Άρθρα</div><div class="t" style="left:36.7px;top:390px;font-size:14px;color:#e8e8ea;letter-spacing:0.125px;">Πολυμέσα</div><div class="t" style="left:36.7px;top:424px;font-size:14px;color:#e8e8ea;letter-spacing:-0.314px;">Σελίδες</div><div class="t" style="left:36.7px;top:458px;font-size:14px;color:#e8e8ea;letter-spacing:0.373px;">Σχόλια</div><div class="t" style="left:36.7px;top:492px;font-size:14px;color:#e8e8ea;letter-spacing:0.121px;">Επικοινωνία</div><div class="t" style="left:36.7px;top:537px;font-size:14px;color:#e8e8ea;letter-spacing:-0.157px;">Elementor</div><div class="t" style="left:36.7px;top:572px;font-size:14px;color:#e8e8ea;letter-spacing:0.428px;">Πρότυπα</div><div class="t" style="left:36.7px;top:606px;font-size:14px;color:#e8e8ea;letter-spacing:-0.488px;">WPForms</div><div class="t" style="left:36.7px;top:651px;font-size:14px;color:#e8e8ea;letter-spacing:-0.003px;">Εμφάνιση</div><div class="t" style="left:36.7px;top:685px;font-size:14px;color:#e8e8ea;letter-spacing:0.316px;">Πρόσθετα</div><div class="t" style="left:36.7px;top:720px;font-size:14px;color:#e8e8ea;letter-spacing:0.217px;">Αποσπάσματα</div><div class="t" style="left:36.7px;top:754px;font-size:14px;color:#e8e8ea;letter-spacing:-0.179px;">Χρήστες</div><div class="t" style="left:36.7px;top:788px;font-size:14px;color:#e8e8ea;letter-spacing:0.020px;">Εργαλεία</div><div class="t" style="left:36.7px;top:822px;font-size:14px;color:#e8e8ea;letter-spacing:-0.078px;">Ρυθμίσεις</div><div class="t" style="left:36.7px;top:856px;font-size:14px;color:#e8e8ea;letter-spacing:-0.368px;">All in One SEO</div><div class="t" style="left:36.7px;top:891px;font-size:14px;color:#e8e8ea;letter-spacing:-0.387px;">WP Mail SMTP</div><div class="t" style="left:1740.3px;top:37px;font-size:13px;color:#1d2327;letter-spacing:-0.165px;">Επιλογές προβολής</div><div class="t" style="left:1771px;top:7px;font-size:13px;color:#f0f0f1;letter-spacing:0.020px;">Γεια σου, ageroth</div><div class="t" style="left:183.9px;top:57px;font-size:23px;color:#1d2327;letter-spacing:0.280px;">Ιδιότητες</div><div class="t" style="left:296.2px;top:58px;font-size:13px;color:#256a9f;letter-spacing:0.233px;">Προσθήκη ιδιότητας</div><div class="t" style="left:185px;top:97px;font-size:13px;color:#256a9f;letter-spacing:-0.211px;"><span style="color:#256a9f">Όλα</span> <span style="color:#50575e">(6.091)</span></div><div class="t" style="left:267.6px;top:97px;font-size:13px;color:#256a9f;letter-spacing:0.051px;"><span style="color:#256a9f">Δικά μου</span> <span style="color:#50575e">(4)</span></div><div class="t" style="left:354.5px;top:97px;font-size:13px;color:#256a9f;letter-spacing:-0.130px;"><span style="color:#256a9f">Δημοσιευμένα</span> <span style="color:#50575e">(5.763)</span></div><div class="t" style="left:495.3px;top:97px;font-size:13px;color:#256a9f;letter-spacing:-0.012px;"><span style="color:#256a9f">Προσχέδια</span> <span style="color:#50575e">(266)</span></div><div class="t" style="left:608.4px;top:97px;font-size:13px;color:#256a9f;letter-spacing:0.026px;"><span style="color:#256a9f">Για έλεγχο</span> <span style="color:#50575e">(3)</span></div><div class="t" style="left:704.8px;top:97px;font-size:13px;color:#256a9f;letter-spacing:0.076px;"><span style="color:#256a9f">Απόρρητο</span> <span style="color:#50575e">(1)</span></div><div class="t" style="left:801.2px;top:97px;font-size:13px;color:#256a9f;letter-spacing:0.012px;"><span style="color:#256a9f">Διαγραμμένο</span> <span style="color:#50575e">(131)</span></div><div class="t" style="left:927.2px;top:97px;font-size:13px;color:#256a9f;letter-spacing:-0.032px;"><span style="color:#256a9f">Disabled by user</span> <span style="color:#50575e">(58)</span></div><div class="t" style="left:258.2px;top:97px;font-size:13px;color:#646970;">|</div><div class="t" style="left:345.09999999999997px;top:97px;font-size:13px;color:#646970;">|</div><div class="t" style="left:485.9px;top:97px;font-size:13px;color:#646970;">|</div><div class="t" style="left:599.3000000000001px;top:97px;font-size:13px;color:#646970;">|</div><div class="t" style="left:695.1px;top:97px;font-size:13px;color:#646970;">|</div><div class="t" style="left:791.5px;top:97px;font-size:13px;color:#646970;">|</div><div class="t" style="left:917.3000000000001px;top:97px;font-size:13px;color:#646970;">|</div><div class="t" style="left:185px;top:122px;font-size:13px;color:#256a9f;letter-spacing:-0.042px;"><span style="color:#256a9f">Αγγλικα</span> <span style="color:#50575e">(2892)</span></div><div class="t" style="left:287.2px;top:122px;font-size:13px;color:#256a9f;letter-spacing:-0.538px;"><span style="color:#256a9f">Ελληνικα</span><span style="color:#50575e">(3168)</span></div><div class="t" style="left:383.3px;top:122px;font-size:13px;color:#256a9f;letter-spacing:0.189px;"><span style="color:#3c434a">Όλες οι γλώσσες</span> <span style="color:#50575e">(6060)</span></div><div class="t" style="left:277.3px;top:122px;font-size:13px;color:#646970;">|</div><div class="t" style="left:375.7px;top:122px;font-size:13px;color:#646970;">|</div><div class="t" style="left:1590px;top:136px;font-size:13px;color:#256a9f;letter-spacing:0.275px;">Αναζήτηση ακινήτου με όνομα ή αναγνωριστικό</div><div class="t" style="left:192.2px;top:182px;font-size:13px;color:#2c3338;letter-spacing:0.539px;">Μαζικές ενέργειες</div><div class="t" style="left:400.2px;top:182px;font-size:13px;color:#256a9f;letter-spacing:-0.059px;">Εφαρμογή</div><div class="t" style="left:498.7px;top:182px;font-size:13px;color:#2c3338;letter-spacing:0.433px;">Όλες οι ημερομηνίες</div><div class="t" style="left:666.1px;top:182px;font-size:13px;color:#2c3338;letter-spacing:0.445px;">Show All Κατηγορίες</div><div class="t" style="left:873px;top:182px;font-size:13px;color:#2c3338;letter-spacing:0.251px;">Show All Τύπος</div><div class="t" style="left:1061.4px;top:182px;font-size:13px;color:#2c3338;letter-spacing:0.356px;">Show All Πόλη</div><div class="t" style="left:1268.5px;top:182px;font-size:13px;color:#757575;letter-spacing:-0.031px;">Listing id</div><div class="t" style="left:1436px;top:182px;font-size:13px;color:#256a9f;letter-spacing:-0.011px;">Φιλτράρισμα</div><div class="t" style="left:1535.4px;top:212px;font-size:13px;color:#50575e;letter-spacing:0.002px;">6.002 στοιχεία</div><div class="t" style="left:1640px;top:212px;font-size:13px;color:#a7aaad;">«</div><div class="t" style="left:1674px;top:212px;font-size:13px;color:#a7aaad;">‹</div><div class="t" style="left:1724.5px;top:212px;font-size:13px;color:#2c3338;">1</div><div class="t" style="left:1766.6px;top:212px;font-size:13px;color:#50575e;letter-spacing:-0.090px;">από 121</div><div class="t" style="left:1832px;top:212px;font-size:13px;color:#256a9f;">›</div><div class="t" style="left:1866px;top:212px;font-size:13px;color:#256a9f;">»</div><div class="t" style="left:227.5px;top:262px;font-size:14px;color:#1d2327;letter-spacing:-0.112px;">Εικόνα</div><div class="t" style="left:355.4px;top:262px;font-size:14px;color:#256a9f;letter-spacing:-0.086px;">Τίτλος</div><div class="t" style="left:707px;top:262px;font-size:14px;color:#1d2327;">Info</div><div class="t" style="left:921.9px;top:262px;font-size:14px;color:#256a9f;letter-spacing:-0.225px;">Τιμή</div><div class="t" style="left:1139.8px;top:262px;font-size:14px;color:#256a9f;letter-spacing:0.401px;">Κατάσταση</div><div class="t" style="left:1357.4px;top:254px;font-size:14px;color:#256a9f;letter-spacing:0.255px;">Προτεινόμενα</div><div class="t" style="left:1458.8px;top:262px;font-size:14px;color:#1d2327;letter-spacing:-0.165px;">User / Date</div><div class="t" style="left:1674.8px;top:262px;font-size:14px;color:#256a9f;letter-spacing:1.050px;">ταυτότητα</div><div class="t" style="left:357.3px;top:309px;font-size:13.5px;font-weight:700;color:#256a9f;letter-spacing:-0.020px;">Ελληνικό, διαμέρισμα 128 τμ, 670000€</div><div class="t" style="left:707.5px;top:308px;font-size:14px;color:#50575e;">City: <span style="color:#256a9f">Άλιμος</span></div><div class="t" style="left:707.5px;top:329px;font-size:14px;color:#50575e;">Action: <span style="color:#256a9f">Πωλήσεις</span></div><div class="t" style="left:707.5px;top:350px;font-size:14px;color:#50575e;">Category: <span style="color:#256a9f">Κατοικία</span></div><div class="t" style="left:707.5px;top:370px;font-size:14px;color:#50575e;">Listing ID: N/A</div><div class="t" style="left:924px;top:308px;font-size:14px;font-weight:700;color:#2c3338;letter-spacing:0.078px;">670.000 €</div><div class="t" style="left:1171.9px;top:304px;font-size:14px;color:#50575e;">Δημοσιευμένο</div><div class="t" style="left:1359.9px;top:308px;font-size:14px;color:#50575e;letter-spacing:-0.204px;">Όχι</div><div class="t" style="left:1459.2px;top:308px;font-size:14px;color:#50575e;">Published by <span style="color:#256a9f">inproperty</span></div><div class="t" style="left:1459.2px;top:329px;font-size:14px;color:#50575e;">23 Σεπτεμβρίου 2025</div><div class="t" style="left:1677px;top:308px;font-size:14px;color:#50575e;letter-spacing:0.130px;">265299</div><div class="t" style="left:357.3px;top:409px;font-size:13.5px;font-weight:700;color:#256a9f;letter-spacing:0.102px;">Ελληνικό, μεζονέτα 94 τμ, 380000€</div><div class="t" style="left:707.5px;top:408px;font-size:14px;color:#50575e;">City: <span style="color:#256a9f">Ελληνικό</span></div><div class="t" style="left:707.5px;top:429px;font-size:14px;color:#50575e;">Action: <span style="color:#256a9f">Πωλήσεις</span></div><div class="t" style="left:707.5px;top:450px;font-size:14px;color:#50575e;">Category: <span style="color:#256a9f">Κατοικία</span></div><div class="t" style="left:707.5px;top:470px;font-size:14px;color:#50575e;">Listing ID: N/A</div><div class="t" style="left:924px;top:408px;font-size:14px;font-weight:700;color:#2c3338;letter-spacing:0.078px;">380.000 €</div><div class="t" style="left:1171.9px;top:404px;font-size:14px;color:#50575e;">Δημοσιευμένο</div><div class="t" style="left:1359.9px;top:408px;font-size:14px;color:#50575e;letter-spacing:-0.204px;">Όχι</div><div class="t" style="left:1459.2px;top:408px;font-size:14px;color:#50575e;">Published by <span style="color:#256a9f">inproperty</span></div><div class="t" style="left:1459.2px;top:429px;font-size:14px;color:#50575e;">23 Σεπτεμβρίου 2025</div><div class="t" style="left:1677px;top:408px;font-size:14px;color:#50575e;letter-spacing:0.130px;">265292</div><div class="t" style="left:357.3px;top:509px;font-size:13.5px;font-weight:700;color:#256a9f;letter-spacing:0.023px;">Ελληνικό, διαμέρισμα 76 τμ, 350000€</div><div class="t" style="left:707.5px;top:508px;font-size:14px;color:#50575e;">City: <span style="color:#256a9f">Ελληνικό</span></div><div class="t" style="left:707.5px;top:529px;font-size:14px;color:#50575e;">Action: <span style="color:#256a9f">Πωλήσεις</span></div><div class="t" style="left:707.5px;top:550px;font-size:14px;color:#50575e;">Category: <span style="color:#256a9f">Κατοικία</span></div><div class="t" style="left:707.5px;top:570px;font-size:14px;color:#50575e;">Listing ID: N/A</div><div class="t" style="left:924px;top:508px;font-size:14px;font-weight:700;color:#2c3338;letter-spacing:0.078px;">350.000 €</div><div class="t" style="left:1171.9px;top:504px;font-size:14px;color:#50575e;">Δημοσιευμένο</div><div class="t" style="left:1359.9px;top:508px;font-size:14px;color:#50575e;letter-spacing:-0.204px;">Όχι</div><div class="t" style="left:1459.2px;top:508px;font-size:14px;color:#50575e;">Published by <span style="color:#256a9f">inproperty</span></div><div class="t" style="left:1459.2px;top:529px;font-size:14px;color:#50575e;">23 Σεπτεμβρίου 2025</div><div class="t" style="left:1677px;top:508px;font-size:14px;color:#50575e;letter-spacing:0.130px;">265285</div><div class="t" style="left:357.3px;top:609px;font-size:13.5px;font-weight:700;color:#256a9f;letter-spacing:0.119px;">Χαλάνδρι, διαμέρισμα 75 τμ, 220000€ eng</div><div class="t" style="left:631.3px;top:609px;font-size:13.5px;color:#50575e;letter-spacing:-0.300px;">—</div><div class="t" style="left:357px;top:630px;font-size:13.5px;font-weight:700;color:#50575e;letter-spacing:-0.160px;">Προσχέδιο</div><div class="t" style="left:707.5px;top:608px;font-size:14px;color:#50575e;">City: </div><div class="t" style="left:707.5px;top:629px;font-size:14px;color:#50575e;">Action: </div><div class="t" style="left:707.5px;top:650px;font-size:14px;color:#50575e;">Category: </div><div class="t" style="left:707.5px;top:670px;font-size:14px;color:#50575e;">Listing ID: N/A</div><div class="t" style="left:924px;top:608px;font-size:14px;font-weight:700;color:#2c3338;letter-spacing:0.078px;">220.000 €</div><div class="t" style="left:1171.9px;top:604px;font-size:14px;color:#50575e;">Προσχέδιο</div><div class="t" style="left:1359.9px;top:608px;font-size:14px;color:#50575e;letter-spacing:-0.204px;">Όχι</div><div class="t" style="left:1459.2px;top:608px;font-size:14px;color:#50575e;">Published by <span style="color:#256a9f">ageroth</span></div><div class="t" style="left:1459.2px;top:629px;font-size:14px;color:#50575e;">22 Σεπτεμβρίου 2025</div><div class="t" style="left:1677px;top:608px;font-size:14px;color:#50575e;letter-spacing:0.130px;">265269</div><div class="t" style="left:357.3px;top:713px;font-size:13.5px;font-weight:700;color:#256a9f;letter-spacing:0.117px;">Χαλάνδρι, διαμέρισμα 75 τμ, 220000€</div><div class="t" style="left:604px;top:713px;font-size:13.5px;color:#50575e;letter-spacing:-0.300px;">—</div><div class="t" style="left:357px;top:734px;font-size:13.5px;font-weight:700;color:#50575e;letter-spacing:-0.160px;">Προσχέδιο</div><div class="t" style="left:707.5px;top:712px;font-size:14px;color:#50575e;">City: <span style="color:#256a9f">Χαλάνδρι</span></div><div class="t" style="left:707.5px;top:733px;font-size:14px;color:#50575e;">Action: <span style="color:#256a9f">Πωλήσεις</span></div><div class="t" style="left:707.5px;top:754px;font-size:14px;color:#50575e;">Category: <span style="color:#256a9f">Κατοικία</span></div><div class="t" style="left:707.5px;top:774px;font-size:14px;color:#50575e;">Listing ID: N/A</div><div class="t" style="left:924px;top:712px;font-size:14px;font-weight:700;color:#2c3338;letter-spacing:0.078px;">220.000 €</div><div class="t" style="left:1171.9px;top:708px;font-size:14px;color:#50575e;">Προσχέδιο</div><div class="t" style="left:1359.9px;top:712px;font-size:14px;color:#50575e;letter-spacing:-0.204px;">Όχι</div><div class="t" style="left:1459.2px;top:712px;font-size:14px;color:#50575e;">Published by <span style="color:#256a9f">ageroth</span></div><div class="t" style="left:1459.2px;top:733px;font-size:14px;color:#50575e;">22 Σεπτεμβρίου 2025</div><div class="t" style="left:1677px;top:712px;font-size:14px;color:#50575e;letter-spacing:0.130px;">265237</div><div class="t" style="left:357.3px;top:818px;font-size:13.5px;font-weight:700;color:#256a9f;letter-spacing:0.080px;">Χαλάνδρι, διαμέρισμα 100 τμ, 300000€</div><div class="t" style="left:707.5px;top:817px;font-size:14px;color:#50575e;">City: <span style="color:#256a9f">Χαλάνδρι</span></div><div class="t" style="left:707.5px;top:838px;font-size:14px;color:#50575e;">Action: <span style="color:#256a9f">Πωλήσεις</span></div><div class="t" style="left:707.5px;top:859px;font-size:14px;color:#50575e;">Category: <span style="color:#256a9f">Κατοικία</span></div><div class="t" style="left:707.5px;top:879px;font-size:14px;color:#50575e;">Listing ID: N/A</div><div class="t" style="left:924px;top:817px;font-size:14px;font-weight:700;color:#2c3338;letter-spacing:0.078px;">300.000 €</div><div class="t" style="left:1171.9px;top:813px;font-size:14px;color:#50575e;">Δημοσιευμένο</div><div class="t" style="left:1359.9px;top:817px;font-size:14px;color:#50575e;letter-spacing:-0.204px;">Όχι</div><div class="t" style="left:1459.2px;top:817px;font-size:14px;color:#50575e;">Published by <span style="color:#256a9f">inproperty</span></div><div class="t" style="left:1459.2px;top:838px;font-size:14px;color:#50575e;">19 Σεπτεμβρίου 2025</div><div class="t" style="left:1677px;top:817px;font-size:14px;color:#50575e;letter-spacing:0.130px;">265179</div><div class="t" style="left:1722.8px;top:883px;font-size:13px;color:#222;letter-spacing:-0.211px;z-index:5">104.21.77.185</div>
<div style="position:absolute;left:1695px;top:880px;width:153px;height:23px;background:#fff;border:1px solid #e2e2e2"></div><svg style="position:absolute;left:1701px;top:887px" width="16" height="11" viewBox="0 0 16 11"><rect width="16" height="11" fill="#fff"/><g fill="#d22"><rect y="0" width="16" height="1.6"/><rect y="3.1" width="16" height="1.6"/><rect y="6.2" width="16" height="1.6"/><rect y="9.4" width="16" height="1.6"/></g><rect width="7" height="5.5" fill="#3c3b8e"/></svg><svg style="position:absolute;left:1811px;top:885px" width="13" height="13" viewBox="0 0 13 13"><path d="M4 1 H12 V9 H9 V12 H1 V4 H4Z M4 4 V9 H9" fill="none" stroke="#222" stroke-width="1.4"/></svg><svg style="position:absolute;left:1832px;top:886px" width="11" height="11" viewBox="0 0 11 11"><path d="M1 1 L10 10 M10 1 L1 10" stroke="#222" stroke-width="1.4"/></svg><svg style="position:absolute;left:0;top:0;z-index:10" width="1909" height="909" viewBox="0 0 1909 909"><line x1="1675" y1="252" x2="1762" y2="98" stroke="#fa3c1e" stroke-width="5" stroke-linecap="round"/><path d="M1776 73 L1752 89 L1775 101Z" fill="#fa3c1e"/></svg>
</body></html>
